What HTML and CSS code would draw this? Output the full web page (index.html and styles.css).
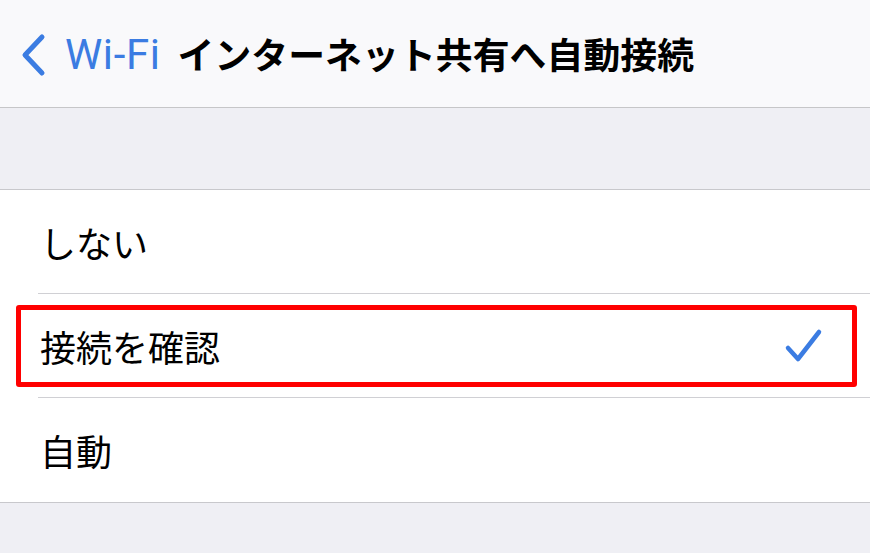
FILE: index.html
```html
<!DOCTYPE html>
<html lang="ja">
<head>
<meta charset="utf-8">
<link rel="stylesheet" href="styles.css">
</head>
<body>
<header class="nav">
  <svg class="chev" width="30" height="44" viewBox="0 0 30 44"><path d="M24 4 L7 22 L24 40" fill="none" stroke="#3b7ce2" stroke-width="5" stroke-linecap="round" stroke-linejoin="round"/></svg>
  <span class="back">Wi-Fi</span>
  <h1 class="title">インターネット共有へ自動接続</h1>
</header>
<div class="gap"></div>
<ul class="list">
  <li class="row"><span class="label">しない</span></li>
  <li class="row selected">
    <span class="label">接続を確認</span>
    <svg class="check" width="40" height="40" viewBox="0 0 40 40"><path d="M4 22 L14 33 L35 6" fill="none" stroke="#3b7ce2" stroke-width="4.5" stroke-linecap="round" stroke-linejoin="round"/></svg>
    <div class="mark"></div>
  </li>
  <li class="row"><span class="label">自動</span></li>
</ul>
</body>
</html>
```
FILE: styles.css
```css
html, body {
  margin: 0;
  padding: 0;
}
body {
  width: 870px;
  height: 553px;
  overflow: hidden;
  background: #efeff4;
  font-family: "Noto Sans CJK JP", "Noto Sans", sans-serif;
  color: #000;
}
.nav {
  height: 108px;
  box-sizing: border-box;
  background: #f9f9fb;
  border-bottom: 1px solid #c6c6c8;
  display: flex;
  align-items: center;
  padding-left: 18px;
}
.chev {
  display: block;
  margin-top: 2px;
}
.back {
  font-family: Roboto, "Liberation Sans", sans-serif;
  font-size: 42px;
  letter-spacing: 0.6px;
  color: #3b7ce2;
  margin-left: 17px;
  margin-top: 2px;
}
.title {
  margin: 0 0 0 17px;
  font-size: 36.8px;
  font-weight: 700;
  letter-spacing: 0.1px;
  line-height: 1;
}
.gap {
  height: 81px;
}
.list {
  list-style: none;
  margin: 0;
  padding: 0;
  background: #fff;
  border-top: 1px solid #c8c8cc;
  border-bottom: 1px solid #c8c8cc;
}
.row {
  position: relative;
  height: 104px;
  display: flex;
  align-items: center;
  justify-content: space-between;
  padding: 0 46px 0 40px;
  box-sizing: border-box;
}
.row + .row::before {
  content: "";
  position: absolute;
  top: -1px;
  left: 38px;
  right: 0;
  height: 1px;
  background: #d0d0d4;
}
.label {
  font-size: 36px;
  line-height: 1;
}
.check {
  display: block;
}
.mark {
  position: absolute;
  left: 16px;
  right: 13px;
  top: 11px;
  bottom: 11px;
  border: 5px solid #f00;
  border-radius: 3px;
}
```
